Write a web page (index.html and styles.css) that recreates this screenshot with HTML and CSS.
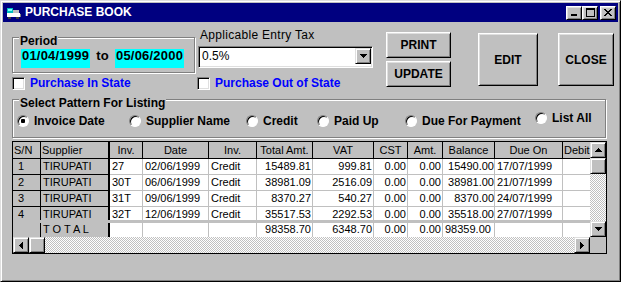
FILE: index.html
```html
<!DOCTYPE html>
<html lang="en">
<head>
  <meta charset="UTF-8">
  <title>Purchase Book</title>
  <link rel="stylesheet" href="styles.css">
</head>
<body>
  <div class="window">
    <div class="titlebar">
      <svg class="app-icon" width="16" height="16" viewBox="0 0 16 16" shape-rendering="crispEdges">
        <rect x="1" y="3" width="6" height="5" fill="#00c0c0"/>
        <rect x="2" y="4" width="4" height="2" fill="#80ffff"/>
        <rect x="1" y="8" width="13" height="4" fill="#ffffff"/>
        <rect x="7" y="5" width="6" height="3" fill="#c0c0c0"/>
        <rect x="2" y="12" width="3" height="2" fill="#404040"/>
        <rect x="10" y="12" width="3" height="2" fill="#404040"/>
        <rect x="14" y="9" width="1" height="3" fill="#808080"/>
      </svg>
      <span class="title">PURCHASE BOOK</span>
      <div class="title-buttons">
        <span class="tbtn"><svg width="8" height="7" viewBox="0 0 8 7" shape-rendering="crispEdges"><rect x="1" y="5" width="6" height="2" fill="#000"/></svg></span>
        <span class="tbtn"><svg width="9" height="9" viewBox="0 0 9 9" shape-rendering="crispEdges"><path d="M0 0h9v9H0z M1 2v6h7V2z" fill="#000" fill-rule="evenodd"/></svg></span>
        <span class="tbtn tbtn-close"><svg width="8" height="7" viewBox="0 0 8 7" shape-rendering="crispEdges"><path d="M0 0h2v1h1v1h2V1h1V0h2v1H7v1H6v1H5v1h1v1h1v1h1v1H6V6H5V5H3v1H2v1H0V6h1V5h1V4h1V3H2V2H1V1H0z" fill="#000"/></svg></span>
      </div>
    </div>

    <div class="client">
      <div class="top">
        <div class="col-period">
          <div class="group period">
            <span class="group-title">Period</span>
            <div class="period-row">
              <span class="date">01/04/1999</span>
              <span class="to">to</span>
              <span class="date">05/06/2000</span>
            </div>
          </div>
          <div class="check"><span class="check-box"></span>Purchase In State</div>
        </div>

        <div class="col-tax">
          <div class="tax-label">Applicable Entry Tax</div>
          <div class="combo">
            <span class="combo-text">0.5%</span>
            <span class="sbtn combo-btn"><svg width="7" height="4" viewBox="0 0 7 4" shape-rendering="crispEdges"><path d="M0 0h7v1H6v1H5v1H4v1H3V3H2V2H1V1H0z" fill="#000"/></svg></span>
          </div>
          <div class="check"><span class="check-box"></span>Purchase Out of State</div>
        </div>

        <div class="col-actions">
          <button class="btn btn-small">PRINT</button>
          <button class="btn btn-small">UPDATE</button>
        </div>
        <button class="btn btn-edit">EDIT</button>
        <button class="btn btn-close">CLOSE</button>
      </div>

      <div class="group pattern">
        <span class="group-title">Select Pattern For Listing</span>
        <div class="radios">
          <div class="radio w-invoice"><span class="radio-dot checked"></span>Invoice Date</div>
          <div class="radio w-supplier"><span class="radio-dot"></span>Supplier Name</div>
          <div class="radio w-credit"><span class="radio-dot"></span>Credit</div>
          <div class="radio w-paid"><span class="radio-dot"></span>Paid Up</div>
          <div class="radio w-due"><span class="radio-dot"></span>Due For Payment</div>
          <div class="radio radio-up"><span class="radio-dot"></span>List All</div>
        </div>
      </div>

      <div class="grid">
        <div class="cells">
          <div class="rows">
            <div class="row head">
              <div class="cell left">S/N</div>
              <div class="cell left supplier">Supplier</div>
              <div class="cell">Inv.</div>
              <div class="cell">Date</div>
              <div class="cell">Inv.</div>
              <div class="cell">Total Amt.</div>
              <div class="cell">VAT</div>
              <div class="cell">CST</div>
              <div class="cell">Amt.</div>
              <div class="cell">Balance</div>
              <div class="cell">Due On</div>
              <div class="cell left">Debit</div>
            </div>
            <div class="row">
              <div class="cell fixed sn">1</div>
              <div class="cell fixed supplier">TIRUPATI</div>
              <div class="cell">27</div>
              <div class="cell">02/06/1999</div>
              <div class="cell">Credit</div>
              <div class="cell num">15489.81</div>
              <div class="cell num">999.81</div>
              <div class="cell num">0.00</div>
              <div class="cell num">0.00</div>
              <div class="cell num flush">15490.00</div>
              <div class="cell">17/07/1999</div>
              <div class="cell"></div>
            </div>
            <div class="row">
              <div class="cell fixed sn">2</div>
              <div class="cell fixed supplier">TIRUPATI</div>
              <div class="cell">30T</div>
              <div class="cell">06/06/1999</div>
              <div class="cell">Credit</div>
              <div class="cell num">38981.09</div>
              <div class="cell num">2516.09</div>
              <div class="cell num">0.00</div>
              <div class="cell num">0.00</div>
              <div class="cell num flush">38981.00</div>
              <div class="cell">21/07/1999</div>
              <div class="cell"></div>
            </div>
            <div class="row">
              <div class="cell fixed sn">3</div>
              <div class="cell fixed supplier">TIRUPATI</div>
              <div class="cell">31T</div>
              <div class="cell">09/06/1999</div>
              <div class="cell">Credit</div>
              <div class="cell num">8370.27</div>
              <div class="cell num">540.27</div>
              <div class="cell num">0.00</div>
              <div class="cell num">0.00</div>
              <div class="cell num flush">8370.00</div>
              <div class="cell">24/07/1999</div>
              <div class="cell"></div>
            </div>
            <div class="row">
              <div class="cell fixed sn">4</div>
              <div class="cell fixed supplier">TIRUPATI</div>
              <div class="cell">32T</div>
              <div class="cell">12/06/1999</div>
              <div class="cell">Credit</div>
              <div class="cell num">35517.53</div>
              <div class="cell num">2292.53</div>
              <div class="cell num">0.00</div>
              <div class="cell num">0.00</div>
              <div class="cell num flush">35518.00</div>
              <div class="cell">27/07/1999</div>
              <div class="cell"></div>
            </div>
          </div>
          <div class="sep"></div>
          <div class="row total">
            <div class="cell fixed"></div>
            <div class="cell fixed supplier">T O T A L</div>
            <div class="cell"></div>
            <div class="cell"></div>
            <div class="cell"></div>
            <div class="cell num">98358.70</div>
            <div class="cell num">6348.70</div>
            <div class="cell num">0.00</div>
            <div class="cell num">0.00</div>
            <div class="cell">98359.00</div>
            <div class="cell"></div>
            <div class="cell"></div>
          </div>
        </div>

        <div class="vscroll">
          <span class="sbtn"><svg width="7" height="4" viewBox="0 0 7 4" shape-rendering="crispEdges"><path d="M3 0h1v1h1v1h1v1h1v1H0V3h1V2h1V1h1z" fill="#000"/></svg></span>
          <span class="sbtn"></span>
          <span class="track"></span>
          <span class="sbtn"><svg width="7" height="4" viewBox="0 0 7 4" shape-rendering="crispEdges"><path d="M0 0h7v1H6v1H5v1H4v1H3V3H2V2H1V1H0z" fill="#000"/></svg></span>
        </div>

        <div class="hscroll">
          <span class="sbtn"><svg width="4" height="7" viewBox="0 0 4 7" shape-rendering="crispEdges"><path d="M3 0h1v7H3V6H2V5H1V4H0V3h1V2h1V1h1z" fill="#000"/></svg></span>
          <span class="sbtn"></span>
          <span class="track"></span>
          <span class="sbtn"><svg width="4" height="7" viewBox="0 0 4 7" shape-rendering="crispEdges"><path d="M0 0h1v1h1v1h1v1h1v1H3v1H2v1H1v1H0z" fill="#000"/></svg></span>
        </div>
        <div class="corner"></div>
      </div>
    </div>
  </div>
</body>
</html>
```

FILE: styles.css
```css
* {
  box-sizing: border-box;
}
body {
  margin: 0;
  background-color: #c0c0c0;
  font-family: "Liberation Sans", Arial, sans-serif;
  color: #000000;
}
.window {
  width: 621px;
  height: 282px;
  background-color: #c0c0c0;
  border: 1px solid;
  border-color: #dfdfdf #000000 #000000 #dfdfdf;
  box-shadow: inset 1px 1px #ffffff, inset -1px -1px #808080;
  padding: 2px;
}
.titlebar {
  display: flex;
  align-items: center;
  height: 19px;
  background-color: #000080;
  color: #ffffff;
  padding-left: 3px;
}
.app-icon {
  display: block;
  margin-top: 1px;
}
.title {
  margin-left: 3px;
  font-size: 12px;
  font-weight: bold;
  line-height: 19px;
}
.title-buttons {
  display: flex;
  margin-left: auto;
  margin-right: 2px;
}
.tbtn {
  display: flex;
  align-items: center;
  justify-content: center;
  width: 16px;
  height: 14px;
  background-color: #c0c0c0;
  border: 1px solid;
  border-color: #ffffff #000000 #000000 #ffffff;
  box-shadow: inset 1px 1px #dfdfdf, inset -1px -1px #808080;
}
.tbtn-close {
  margin-left: 2px;
}

/* top area */
.top {
  display: flex;
  align-items: flex-start;
  height: 77px;
  padding-left: 9px;
}
.col-period {
  width: 185px;
  margin-top: 15px;
}
.group {
  border: 1px solid #808080;
  box-shadow: inset 1px 1px #ffffff, 1px 1px #ffffff;
}
.group-title {
  display: table;
  margin: -4px 0 0 6px;
  padding: 0 1px;
  background-color: #c0c0c0;
  font-size: 12px;
  font-weight: bold;
  line-height: 14px;
}
.period {
  width: 183px;
  height: 36px;
}
.period-row {
  display: flex;
  margin: 1px 0 0 8px;
}
.date {
  width: 69px;
  height: 19px;
  padding-left: 1px;
  background-color: #00ffff;
  font-size: 13px;
  font-weight: bold;
  line-height: 14px;
  letter-spacing: 0.2px;
}
.to {
  width: 25px;
  text-align: center;
  font-size: 13px;
  font-weight: bold;
  line-height: 14px;
}
.check {
  display: flex;
  align-items: center;
  gap: 5px;
  height: 13px;
  margin-top: 4px;
  color: #0000ff;
  font-size: 12px;
  font-weight: bold;
  line-height: 13px;
  white-space: nowrap;
}
.check-box {
  width: 13px;
  height: 13px;
  flex-shrink: 0;
  background-color: #ffffff;
  border: 1px solid;
  border-color: #808080 #ffffff #ffffff #808080;
  box-shadow: inset 1px 1px #000000, inset -1px -1px #dfdfdf;
}
.col-tax {
  width: 176px;
  margin-top: 6px;
}
.tax-label {
  padding-left: 3px;
  font-size: 12px;
  line-height: 14px;
  letter-spacing: 0.3px;
}
.col-tax .check {
  margin-top: 9px;
}
.combo {
  display: flex;
  width: 175px;
  height: 22px;
  margin: 4px 0 0 1px;
  padding: 1px;
  background-color: #ffffff;
  border: 1px solid;
  border-color: #808080 #ffffff #ffffff #808080;
  box-shadow: inset 1px 1px #000000, inset -1px -1px #dfdfdf;
}
.combo-text {
  flex: 1;
  padding-left: 2px;
  font-size: 12px;
  line-height: 16px;
}
.combo-btn {
  width: 16px;
  height: 18px;
}

/* buttons */
.btn {
  padding: 0;
  background-color: #c0c0c0;
  color: #000000;
  font-family: "Liberation Sans", Arial, sans-serif;
  font-size: 12px;
  font-weight: bold;
  border: 1px solid;
  border-color: #ffffff #000000 #000000 #ffffff;
  box-shadow: inset 1px 1px #dfdfdf, inset -1px -1px #808080;
}
.col-actions {
  margin: 10px 0 0 13px;
}
.btn-small {
  display: block;
  width: 65px;
  height: 26px;
}
.btn-small + .btn-small {
  margin-top: 3px;
}
.btn-edit {
  width: 60px;
  height: 53px;
  margin: 11px 0 0 27px;
}
.btn-close {
  width: 56px;
  height: 53px;
  margin: 11px 0 0 20px;
}

/* listing pattern */
.pattern {
  width: 594px;
  height: 39px;
  margin-left: 9px;
}
.radios {
  display: flex;
  align-items: flex-start;
  margin: 4px 0 0 4px;
}
.radio {
  display: flex;
  align-items: center;
  gap: 5px;
  font-size: 12px;
  font-weight: bold;
  line-height: 14px;
  white-space: nowrap;
}
.w-invoice { width: 112px; }
.w-supplier { width: 117px; }
.w-credit { width: 71px; }
.w-paid { width: 88px; }
.w-due { width: 130px; }
.radio-up {
  margin-top: -3px;
}
.radio-dot {
  width: 12px;
  height: 12px;
  border-radius: 50%;
  background-color: #ffffff;
  border: 1px solid;
  border-color: #808080 #ffffff #ffffff #808080;
  box-shadow: inset 1px 1px #000000;
}
.radio-dot.checked {
  background: radial-gradient(circle, #000000 0 2px, #ffffff 2.5px);
}

/* grid */
.grid {
  display: grid;
  grid-template-columns: 577px 16px;
  grid-template-rows: 95px 16px;
  width: 595px;
  height: 113px;
  margin: 3px 0 0 9px;
  border: 1px solid #000000;
  background-color: #ffffff;
}
.cells {
  overflow: hidden;
}
.rows {
  height: 78px;
  overflow: hidden;
}
.row {
  display: grid;
  grid-template-columns: 28px 69px 33px 66px 48px 56px 61px 34px 35px 52px 68px 60px;
  height: 16px;
}
.cell {
  padding: 0 2px;
  border-right: 1px solid #c0c0c0;
  border-bottom: 1px solid #c0c0c0;
  font-size: 11px;
  line-height: 15px;
  white-space: nowrap;
  overflow: hidden;
}
.head {
  height: 17px;
}
.head .cell {
  background-color: #c0c0c0;
  border-color: #000000;
  text-align: center;
  line-height: 16px;
}
.head .left {
  text-align: left;
  padding-left: 1px;
}
.fixed {
  background-color: #c0c0c0;
  border-color: #000000;
}
.sn {
  padding-left: 5px;
}
.supplier {
  border-right-width: 2px;
}
.num {
  text-align: right;
  padding-right: 1px;
}
.flush {
  padding-right: 0;
}
.sep {
  height: 3px;
  background-color: #c0c0c0;
}
.total {
  height: 14px;
}
.total .cell {
  border-bottom: none;
  line-height: 13px;
}
.vscroll {
  display: flex;
  flex-direction: column;
}
.hscroll {
  display: flex;
}
.sbtn {
  display: flex;
  align-items: center;
  justify-content: center;
  width: 16px;
  height: 16px;
  flex-shrink: 0;
  background-color: #c0c0c0;
  border: 1px solid;
  border-color: #dfdfdf #000000 #000000 #dfdfdf;
  box-shadow: inset 1px 1px #ffffff, inset -1px -1px #808080;
}
.track {
  flex: 1;
  background-image: repeating-conic-gradient(#ffffff 0 25%, #c0c0c0 0 50%);
  background-size: 2px 2px;
}
.corner {
  background-color: #c0c0c0;
}
```
